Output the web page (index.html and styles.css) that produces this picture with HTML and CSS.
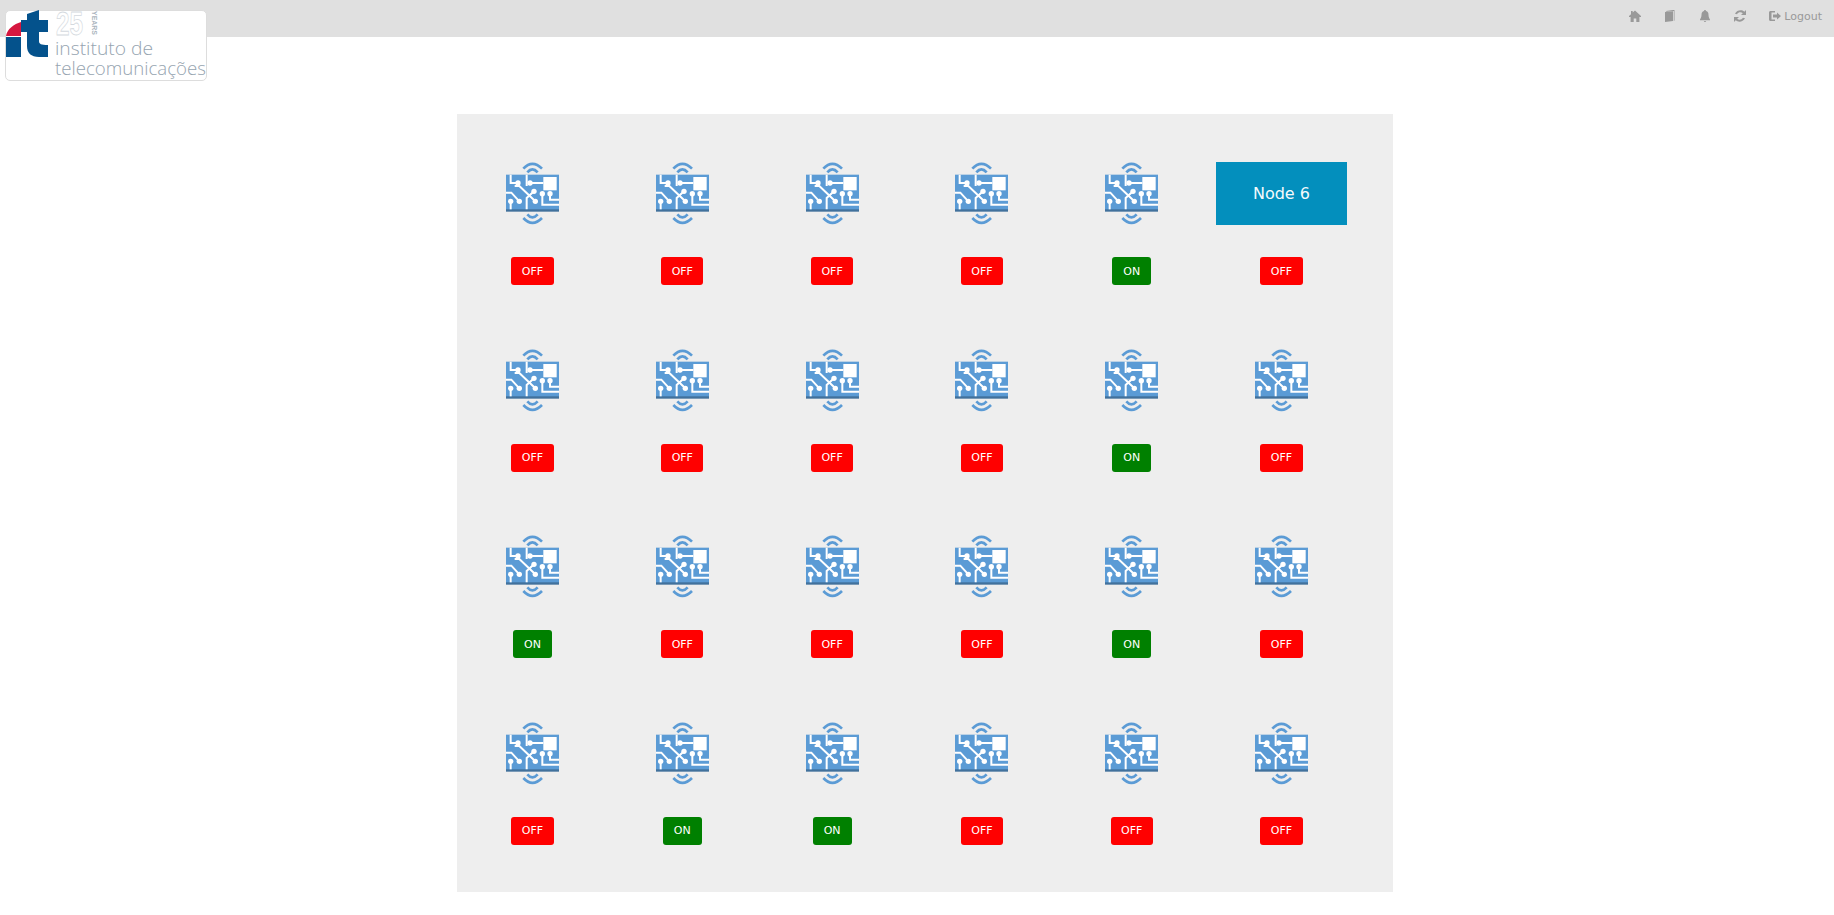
FILE: index.html
```html
<!DOCTYPE html>
<html lang="en">
<head>
  <meta charset="UTF-8">
  <meta name="viewport" content="width=device-width, initial-scale=1.0">
  <title>Nodes</title>
  <link rel="stylesheet" href="styles.css">
</head>
<body>
  <svg class="defs" width="0" height="0">
    <symbol id="node" viewBox="0 0 159 189">
      <path d="M52 20Q79 -9 108 20M64 31Q79 13 95 31" fill="none" stroke="#5b9bd5" stroke-width="8"/>
      <path d="M52 168Q79 197 108 168M64 157Q79 175 95 157" fill="none" stroke="#5b9bd5" stroke-width="8"/>
      <rect x="0" y="38" width="159" height="106" fill="#5b9bd5"/>
      <rect x="0" y="142" width="159" height="7" fill="#41719c"/>
      <rect x="112" y="45" width="40" height="40" fill="#fff"/>
      <g fill="none" stroke="#fff" stroke-width="6">
        <path d="M14 38V63H36"/>
        <path d="M72 63H112"/>
        <path d="M62 38V72"/>
        <path d="M0 92H16L40 118"/>
        <path d="M26 72H40L88 118"/>
        <path d="M14 118V142"/>
        <path d="M84 88L62 108V142"/>
        <path d="M109 95V128H159"/>
        <path d="M132 95V113H159"/>
      </g>
      <g fill="#fff">
        <circle cx="36" cy="63" r="8"/>
        <circle cx="72" cy="63" r="8"/>
        <circle cx="14" cy="118" r="8"/>
        <circle cx="40" cy="118" r="8"/>
        <circle cx="88" cy="118" r="8"/>
        <circle cx="84" cy="88" r="8"/>
        <circle cx="109" cy="95" r="8"/>
        <circle cx="132" cy="95" r="8"/>
      </g>
    </symbol>
  </svg>

  <nav class="topbar">
    <a class="nav-item" href="#"><svg class="nav-icon" viewBox="0 0 12 12"><path d="M6 .5 12 6v1h-1.600v5H7.300V8.500H4.700V12H1.600V7H0V6L2 4.200V1h1.700v1.600z"/></svg></a>
    <a class="nav-item" href="#"><svg class="nav-icon" viewBox="0 0 12 12"><path d="M2 1 9 0h1.500V10.500L9.800 11V1L2.500 1.800z"/><path d="M1 2 9 1.300V11L1 12z"/></svg></a>
    <a class="nav-item" href="#"><svg class="nav-icon" viewBox="0 0 12 12"><path d="M6 0C6.700 0 7 .5 7 1 9 1.500 9.500 3 9.500 5c0 2.500 1 3.500 1.500 4.500v.7H1V9.500C1.500 8.500 2.500 7.500 2.500 5 2.500 3 3 1.500 5 1 5 .5 5.300 0 6 0zM4.800 11h2.400C7 11.700 6.600 12 6 12S5 11.700 4.800 11z"/></svg></a>
    <a class="nav-item" href="#"><svg class="nav-icon" viewBox="0 0 12 12"><path d="M10.300 1.700 12 0v5H7l1.800-1.800C7.200 1.700 4.300 2 3 4.200L1 3.700C2.800.2 7.500-.7 10.300 1.700zM1.700 10.300 0 12V7h5L3.200 8.800C4.800 10.300 7.700 10 9 7.800l2 .5C9.200 11.800 4.500 12.700 1.700 10.300z"/></svg></a>
    <a class="nav-item logout" href="#"><svg class="nav-icon" viewBox="0 0 12 12"><path d="M1.500 1H6V2.500H2.500v7H6V11H1.500C.7 11 0 10.300 0 9.500v-7C0 1.700.7 1 1.500 1zM8 2.500 12 6 8 9.500V7.500H4v-3h4z"/></svg>Logout</a>
  </nav>

  <div class="logo">
    <svg class="logo-art" viewBox="0 0 200 69" width="200" height="69">
      <path d="M0 25C1 18 8 13 15 11V25z" fill="#d5173f"/>
      <path d="M0 26H15V46H0z" fill="#04528c"/>
      <path d="M21 3 33 -1V9H42V21H33V30C33 33 35 34 42 34V46H33C25 46 21 42 21 35V21H15V9H21z" fill="#04528c"/>
      <text class="logo-years" x="50" y="24" textLength="27" lengthAdjust="spacingAndGlyphs">25</text>
      <text class="logo-small" transform="translate(86 0) rotate(90)" textLength="24" lengthAdjust="spacingAndGlyphs">YEARS</text>
      <text class="logo-name" x="49" y="44" textLength="98" lengthAdjust="spacingAndGlyphs">instituto de</text>
      <text class="logo-name" x="49" y="64" textLength="151" lengthAdjust="spacingAndGlyphs">telecomunicações</text>
    </svg>
  </div>

  <main class="panel">
    <div class="node"><svg class="node-icon"><use href="#node"/></svg><button class="state off">OFF</button></div>
    <div class="node"><svg class="node-icon"><use href="#node"/></svg><button class="state off">OFF</button></div>
    <div class="node"><svg class="node-icon"><use href="#node"/></svg><button class="state off">OFF</button></div>
    <div class="node"><svg class="node-icon"><use href="#node"/></svg><button class="state off">OFF</button></div>
    <div class="node"><svg class="node-icon"><use href="#node"/></svg><button class="state on">ON</button></div>
    <div class="node"><div class="node-label">Node 6</div><button class="state off">OFF</button></div>

    <div class="node"><svg class="node-icon"><use href="#node"/></svg><button class="state off">OFF</button></div>
    <div class="node"><svg class="node-icon"><use href="#node"/></svg><button class="state off">OFF</button></div>
    <div class="node"><svg class="node-icon"><use href="#node"/></svg><button class="state off">OFF</button></div>
    <div class="node"><svg class="node-icon"><use href="#node"/></svg><button class="state off">OFF</button></div>
    <div class="node"><svg class="node-icon"><use href="#node"/></svg><button class="state on">ON</button></div>
    <div class="node"><svg class="node-icon"><use href="#node"/></svg><button class="state off">OFF</button></div>

    <div class="node"><svg class="node-icon"><use href="#node"/></svg><button class="state on">ON</button></div>
    <div class="node"><svg class="node-icon"><use href="#node"/></svg><button class="state off">OFF</button></div>
    <div class="node"><svg class="node-icon"><use href="#node"/></svg><button class="state off">OFF</button></div>
    <div class="node"><svg class="node-icon"><use href="#node"/></svg><button class="state off">OFF</button></div>
    <div class="node"><svg class="node-icon"><use href="#node"/></svg><button class="state on">ON</button></div>
    <div class="node"><svg class="node-icon"><use href="#node"/></svg><button class="state off">OFF</button></div>

    <div class="node"><svg class="node-icon"><use href="#node"/></svg><button class="state off">OFF</button></div>
    <div class="node"><svg class="node-icon"><use href="#node"/></svg><button class="state on">ON</button></div>
    <div class="node"><svg class="node-icon"><use href="#node"/></svg><button class="state on">ON</button></div>
    <div class="node"><svg class="node-icon"><use href="#node"/></svg><button class="state off">OFF</button></div>
    <div class="node"><svg class="node-icon"><use href="#node"/></svg><button class="state off">OFF</button></div>
    <div class="node"><svg class="node-icon"><use href="#node"/></svg><button class="state off">OFF</button></div>
  </main>
</body>
</html>
```

FILE: styles.css
```css
* {
  margin: 0;
  padding: 0;
  box-sizing: border-box;
}

body {
  font-family: "DejaVu Sans", sans-serif;
  background-color: #fff;
  color: #333;
}

.defs {
  display: block;
}

/* Top bar */
.topbar {
  height: 37px;
  background-color: #e0e0e0;
  display: flex;
  justify-content: flex-end;
  align-items: flex-start;
  gap: 23px;
  padding: 10px 12px 0 0;
}

.nav-item {
  display: flex;
  align-items: center;
  height: 12px;
  color: #999;
  font-size: 11px;
  text-decoration: none;
}

.nav-icon {
  width: 12px;
  height: 12px;
  fill: #999;
}

.logout .nav-icon {
  margin-right: 3px;
}

/* Logo */
.logo {
  position: absolute;
  left: 5px;
  top: 10px;
  width: 202px;
  height: 71px;
  background-color: #fff;
  border: 1px solid #ddd;
  border-radius: 5px;
}

.logo-art {
  display: block;
  overflow: visible;
}

.logo-years {
  font-family: "Liberation Sans", sans-serif;
  font-size: 34px;
  font-weight: bold;
  fill: #fff;
  stroke: #d4d9de;
  stroke-width: 0.8;
}

.logo-small {
  font-family: "Liberation Sans", sans-serif;
  font-size: 7px;
  font-weight: bold;
  fill: #aab4bd;
}

.logo-name {
  font-family: "Open Sans", sans-serif;
  font-size: 19px;
  font-weight: 300;
  fill: #96a4b0;
}

/* Node grid */
.panel {
  width: 936px;
  height: 778px;
  margin: 77px 0 0 457px;
  padding: 48px 0 0 0.6px;
  background-color: #eee;
  display: grid;
  grid-template-columns: repeat(6, 149.8px);
  grid-auto-rows: 186.5px;
}

.node {
  display: flex;
  flex-direction: column;
  align-items: center;
}

.node-icon {
  display: block;
  width: 53px;
  height: 63px;
}

.node-label {
  width: 131px;
  height: 63px;
  background-color: #038fbd;
  color: #f4fafc;
  font-size: 16px;
  display: flex;
  align-items: center;
  justify-content: center;
}

.state {
  margin-top: 32px;
  height: 28px;
  padding: 0 11px;
  border: none;
  border-radius: 3px;
  color: #fff;
  font-family: "DejaVu Sans", sans-serif;
  font-size: 11px;
  cursor: pointer;
}

.off {
  background-color: #f00;
  padding: 0 10.4px;
}

.on {
  background-color: #008000;
}
```
